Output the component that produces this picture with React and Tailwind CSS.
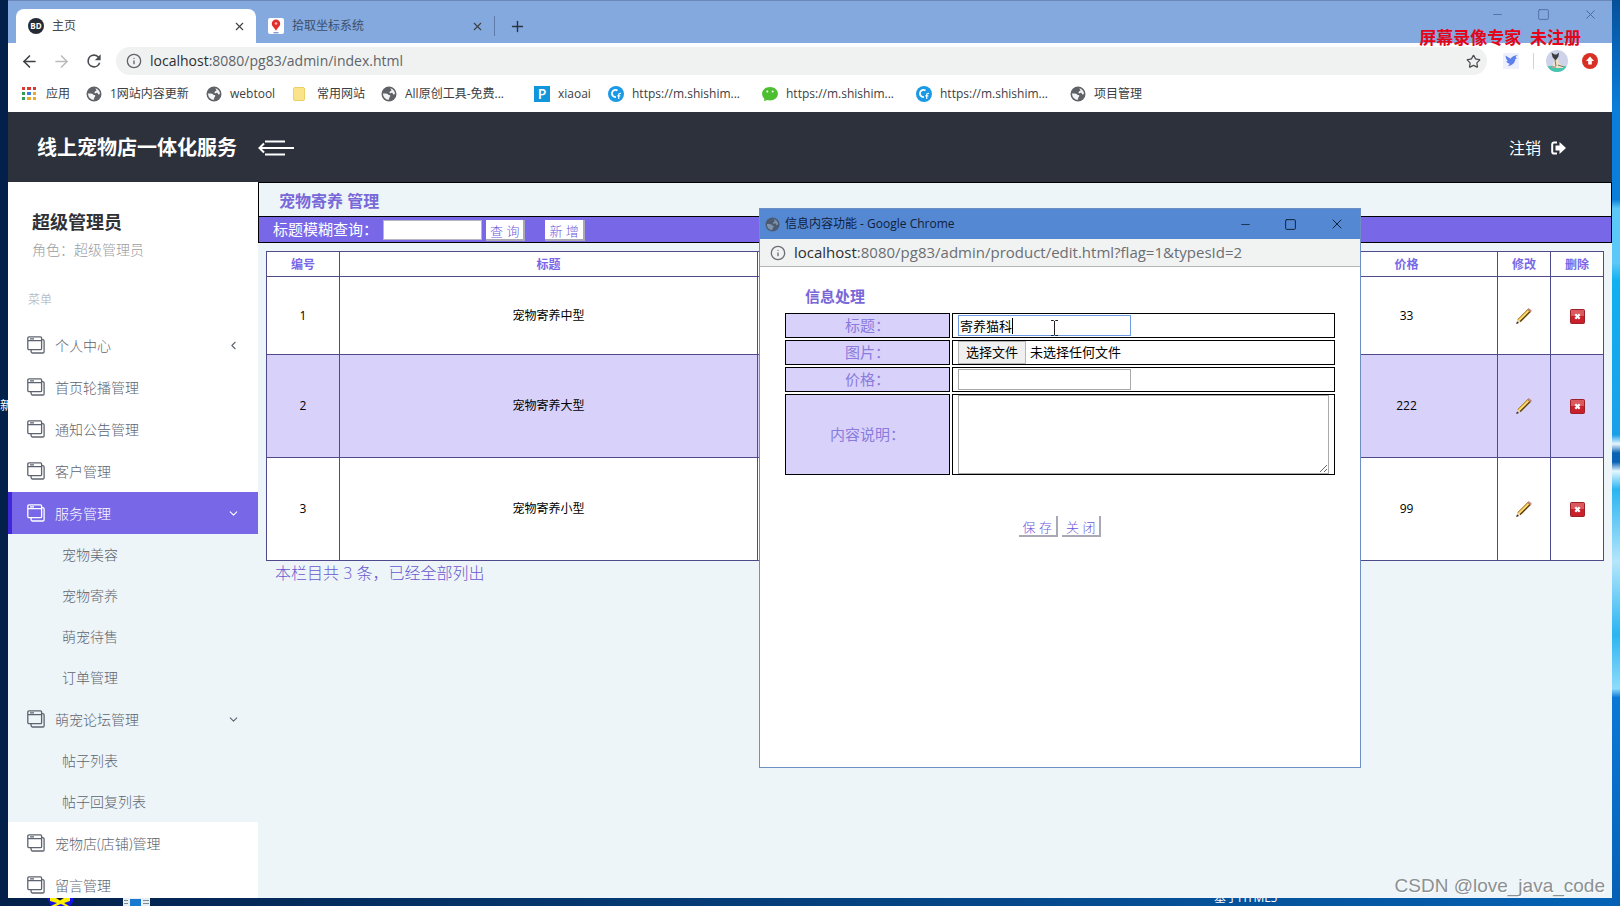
import React, { useState } from "react";
import { ArrowLeft, ArrowRight, ChevronDown, ChevronLeft, Info, Minus, Plus, Square, Star, X } from "lucide-react";

const BOOKMARKS = [
  { label: "1网站内容更新", icon: "globe", width: "w-[120px]" },
  { label: "webtool", icon: "globe", width: "w-[87px]" },
  { label: "常用网站", icon: "folder", width: "w-[88px]" },
  { label: "All原创工具-免费...", icon: "globe", width: "w-[153px]" },
  { label: "xiaoai", icon: "p", width: "w-[74px]" },
  { label: "https://m.shishim...", icon: "c", width: "w-[154px]" },
  { label: "https://m.shishim...", icon: "wechat", width: "w-[154px]" },
  { label: "https://m.shishim...", icon: "c", width: "w-[154px]" },
  { label: "项目管理", icon: "globe", width: "w-[90px]" },
];

const MENU = [
  { label: "个人中心", arrow: "left" },
  { label: "首页轮播管理" },
  { label: "通知公告管理" },
  { label: "客户管理" },
  { label: "服务管理", arrow: "down", active: true, children: ["宠物美容", "宠物寄养", "萌宠待售", "订单管理"] },
  { label: "萌宠论坛管理", arrow: "down", children: ["帖子列表", "帖子回复列表"] },
  { label: "宠物店(店铺)管理" },
  { label: "留言管理" },
];

const ROWS = [
  { id: 1, title: "宠物寄养中型", price: 33, height: "h-[78px]" },
  { id: 2, title: "宠物寄养大型", price: 222, height: "h-[103px]" },
  { id: 3, title: "宠物寄养小型", price: 99, height: "h-[103px]" },
];

const APP_DOTS = ["#d93b30", "#d93b30", "#d93b30", "#2f9e5b", "#3b7de0", "#e8a92c", "#2f9e5b", "#e8a92c", "#e8a92c"];

function GlobeIcon({ size = 16, color = "#5f6368", land = "#f4f4f4" }) {
  return (
    <svg width={size} height={size} viewBox="0 0 16 16" className="shrink-0">
      <circle cx="8" cy="8" r="7.500" fill={color} />
      <path
        fill={land}
        d="M9.500 2.300c2.400.6 4.300 2.700 4.500 5.400-.7.700-1.300 1.100-1.900.6-.5-.5-.2-1.400-1-1.500-.9-.1-1.200.8-2 .5-.9-.3-.6-1.200-.1-1.700.5-.6 1.300-.5 1.400-1.200.1-.8-.9-1-.9-2.100z"
      />
      <path
        fill={land}
        d="M2 7.600c1.800-.4 4.300-.2 5.200.8.7.8 1.600.4 2 1.100.4.900-.5 1.300-.8 2-.3.800-.1 1.700-1 2.400-3-.3-5.300-2.900-5.400-6.300z"
      />
    </svg>
  );
}

function BookmarkIcon({ type }) {
  if (type === "globe") return <GlobeIcon />;
  if (type === "folder") return <span className="w-3 h-3.5 mr-1 shrink-0 rounded-xs bg-[#fbe38a] border border-[#ecd066]" />;
  if (type === "p") {
    return (
      <span className="w-4 h-4 shrink-0 bg-[#1296db] text-white text-sm leading-4 text-center font-semibold">P</span>
    );
  }
  if (type === "wechat") {
    return (
      <svg width="16" height="16" viewBox="0 0 16 16" className="shrink-0">
        <path fill="#4bbf2f" d="M8 1c4.400 0 7.900 2.900 7.900 6.700S12.400 14.400 8 14.400c-.9 0-1.700-.1-2.500-.3L2 15l.4-2.200C1 11.500.1 9.700.1 7.700.1 3.900 3.600 1 8 1z" />
        <circle cx="5.300" cy="5.600" r="1" fill="#fff" />
        <circle cx="10.700" cy="5.600" r="1" fill="#fff" />
      </svg>
    );
  }
  return (
    <svg width="16" height="16" viewBox="0 0 16 16" className="shrink-0">
      <circle cx="8" cy="8" r="8" fill="#1a9ae6" />
      <path d="M9.500 4.400A3.600 3.600 0 1 0 8 11" fill="none" stroke="#fff" strokeWidth="1.800" />
      <path d="M13 7.500c-1.800-.6-2.300.3-2.300 1.700V13M9.300 9.800h3" fill="none" stroke="#fff" strokeWidth="1.200" />
    </svg>
  );
}

function ReloadIcon() {
  return (
    <svg width="20" height="20" viewBox="0 0 24 24">
      <path
        fill="#4a4d51"
        d="M17.650 6.350A7.960 7.960 0 0 0 12 4a8 8 0 1 0 7.730 10h-2.080A6 6 0 1 1 12 6c1.660 0 3.140.69 4.220 1.780L13 11h7V4z"
      />
    </svg>
  );
}

function MenuIcon() {
  return (
    <svg width="18" height="18" viewBox="0 0 18 18" fill="none" stroke="currentColor" strokeWidth="1.300" className="shrink-0">
      <rect x="0.800" y="0.800" width="13.800" height="12.800" rx="1.200" />
      <path d="M1 4.700h13.500M3 2.800h4" />
      <path d="M14.600 3.600h1a1.500 1.500 0 0 1 1.500 1.500v10.700a1.200 1.200 0 0 1-1.200 1.200H5.600a1.500 1.500 0 0 1-1.500-1.500v-1.700" />
    </svg>
  );
}

function PencilIcon() {
  return (
    <svg width="16" height="16" viewBox="0 0 16 16">
      <path d="M1.500 11.500 11.500 1.500l3 2.500-10 10z" fill="#d9a63a" />
      <path d="M2.600 11.800 12 2.500l1 .9-9.500 9.500z" fill="#f6e27a" />
      <path d="m4 13.800 10-10" stroke="#5a3d14" strokeWidth="1.300" />
      <path d="m1.500 11.500 10-10" stroke="#a67a28" strokeWidth=".7" />
      <path d="m11.500 1.500 1.200-1 2.800 2.300-1.200 1.300z" fill="#d58c7b" stroke="#8a5b3c" strokeWidth=".5" />
      <path d="m1.500 11.500 3 2.500-4 1.800z" fill="#e9cfa6" />
      <path d="M1 13.500.2 16l2.800-1z" fill="#222" />
    </svg>
  );
}

function DeleteIcon() {
  return (
    <svg width="15" height="15" viewBox="0 0 15 15">
      <rect x="0.500" y="0.500" width="14" height="14" rx="1" fill="#c9202b" stroke="#9c2028" />
      <rect x="1" y="1" width="13" height="6" fill="#dc5a5f" />
      <path d="m5.300 5.300 4.400 4.400m0-4.400L5.300 9.700" stroke="#fff" strokeWidth="2.200" />
    </svg>
  );
}

function Tab({ label, icon, active, width }) {
  return (
    <div className={`flex items-center h-[34px] pl-3 pr-2.5 text-xs ${width} ${active ? "bg-white rounded-t-lg text-[#45484c]" : "text-[#3c4f6b]"}`}>
      {icon}
      <span className="ml-2 flex-1 truncate">{label}</span>
      <button type="button" aria-label={`关闭 ${label}`}>
        <X size={13} className="text-[#3c4043]" />
      </button>
    </div>
  );
}

function BrowserChrome() {
  return (
    <div className="shrink-0">
      <div className="flex items-end h-[43px] bg-[#83a9df] border-t border-[#6b87b8] pl-2">
        <Tab
          label="主页"
          active
          width="w-[240px]"
          icon={
            <span className="w-4 h-4 rounded-full bg-[#262a33] text-white text-[8px] leading-4 text-center font-bold">BD</span>
          }
        />
        <Tab
          label="拾取坐标系统"
          width="w-[238px]"
          icon={
            <svg width="16" height="16" viewBox="0 0 16 16" className="shrink-0">
              <rect width="16" height="16" rx="2" fill="#fff" />
              <path d="M8 1.500a4.200 4.200 0 0 1 4.200 4.200C12.200 8.500 9 10 8 13 7 10 3.800 8.500 3.800 5.700A4.200 4.200 0 0 1 8 1.500z" fill="#e02f2c" />
              <circle cx="8" cy="5.500" r="1.300" fill="#f7b5b3" />
              <path d="M5.500 14.800h5" stroke="#5570c8" />
            </svg>
          }
        />
        <div className="flex items-center h-[34px] gap-3.5">
          <span className="w-px h-5 bg-[#5d7aa8]" />
          <button type="button" aria-label="新标签页">
            <Plus size={17} className="text-[#2b3440]" />
          </button>
        </div>
        <div className="ml-auto self-start flex items-center gap-[33px] mt-1.5 pr-3.5 text-[#48689c]">
          <button type="button" aria-label="最小化"><Minus size={13} strokeWidth={1.5} /></button>
          <button type="button" aria-label="最大化"><Square size={13} strokeWidth={1.5} /></button>
          <button type="button" aria-label="关闭"><X size={15} strokeWidth={1.5} /></button>
        </div>
      </div>

      <div className="flex items-center h-9 bg-white pl-3 pr-3.5 text-[#5f6368]">
        <button type="button" aria-label="后退" className="w-8"><ArrowLeft size={19} className="text-[#3c4043]" /></button>
        <button type="button" aria-label="前进" className="w-8"><ArrowRight size={19} className="text-[#b9bbbe]" /></button>
        <button type="button" aria-label="刷新" className="w-8"><ReloadIcon /></button>
        <div className="flex-1 flex items-center h-7 mr-4 pl-2.5 pr-1.5 rounded-full bg-[#f0f2f2] text-sm">
          <Info size={16} className="mr-2 shrink-0" />
          <span><span className="text-[#2c2e31]">localhost</span>:8080/pg83/admin/index.html</span>
          <button type="button" aria-label="收藏" className="ml-auto"><Star size={15} className="text-[#4a4d51]" /></button>
        </div>
        <svg width="16" height="16" viewBox="0 0 16 16" className="shrink-0">
          <rect width="16" height="16" fill="#eef1fd" />
          <path fill="#5c80ee" d="m2.500 2.500 5 3.200C9 3.500 11 2.700 14.500 2c-1.300 1-1.700 1.700-1.900 2.300l1.400.9-1.700 1.100C12 9.800 9.500 12.500 5 13c1-.8 1.500-1.500 1.700-2.200C4.500 10.300 3.800 9.300 3.300 8l1.700.2C3.500 6.500 2.700 5 2.500 2.500z" />
        </svg>
        <span className="w-px h-4 ml-3.5 mr-3 bg-[#cfd3d8]" />
        <svg width="22" height="22" viewBox="0 0 22 22" className="shrink-0">
          <clipPath id="avatar"><circle cx="11" cy="11" r="11" /></clipPath>
          <g clipPath="url(#avatar)">
            <rect width="22" height="22" fill="#cfd3ea" />
            <path d="M0 17c5-2 16-2 22 0v5H0z" fill="#45c4b0" />
            <path d="M8 9h4l1 4 5 4-1 1H6z" fill="#ece2cc" />
            <path d="m5.500 2.500 3 2h2l2.500-2-.5 4-2.500 3.500h-1L6.500 7z" fill="#3a3f42" />
            <path d="m9 10 1 6M12 15l6 2M6 17h4" stroke="#7d7766" />
          </g>
        </svg>
        <svg width="16" height="16" viewBox="0 0 16 16" className="ml-3.5 shrink-0">
          <circle cx="8" cy="8" r="8" fill="#d93025" />
          <path d="M8 3.500 12 8H9.800v3.500H6.200V8H4z" fill="#fff" />
        </svg>
      </div>

      <nav className="flex items-center h-[33px] pb-1 bg-white pl-3.5 text-xs text-[#3c4043] whitespace-nowrap">
        <a href="#apps" className="flex items-center gap-2.5 w-[64px]">
          <span className="grid grid-cols-3 gap-0.5 w-[14px]">
            {APP_DOTS.map((c, i) => (
              <span key={i} className="h-[3px]" style={{ backgroundColor: c }} />
            ))}
          </span>
          应用
        </a>
        {BOOKMARKS.map((b, i) => (
          <a key={i} href="#bookmark" className={`flex items-center gap-2 shrink-0 ${b.width}`}>
            <BookmarkIcon type={b.icon} />
            {b.label}
          </a>
        ))}
      </nav>
    </div>
  );
}

function MenuItem({ item }) {
  const Arrow = item.arrow === "left" ? ChevronLeft : ChevronDown;
  return (
    <li className={item.children ? "bg-[#edf5f8]" : ""}>
      <a
        href="#menu"
        className={`flex items-center h-[42px] pr-[18px] ${item.active ? "bg-[#7868e8] text-white border-l-4 border-[#4027d8] pl-[15px]" : "pl-[19px]"}`}
      >
        <MenuIcon />
        <span className="ml-2.5 pt-0.5">{item.label}</span>
        {item.arrow && <Arrow size={13} className="ml-auto" />}
      </a>
      {item.children && (
        <ul>
          {item.children.map((c) => (
            <li key={c}>
              <a href="#submenu" className="flex items-center h-[41px] pl-[54px]">{c}</a>
            </li>
          ))}
        </ul>
      )}
    </li>
  );
}

function Sidebar() {
  return (
    <aside className="w-[250px] shrink-0 bg-white overflow-hidden text-sm font-light text-[#5d6470]">
      <div className="pt-6 pl-6">
        <h2 className="text-lg leading-8 font-bold text-[#2f3136]">超级管理员</h2>
        <p className="leading-6 text-[#9a9da3]">角色：超级管理员</p>
      </div>
      <p className="mt-[26px] pl-5 h-9 leading-6 text-xs text-[#a6a9ae]">菜单</p>
      <ul>
        {MENU.map((item) => (
          <MenuItem key={item.label} item={item} />
        ))}
      </ul>
    </aside>
  );
}

function FlatButton({ children }) {
  return (
    <button
      type="button"
      className="h-[21px] px-1 pt-0.5 leading-4 bg-white text-[13px] font-light text-[#6a58dc] border-r-2 border-b-2 border-[#a9a9b5] whitespace-pre"
    >
      {children}
    </button>
  );
}

function ListPage() {
  const head = "pt-0.5 border border-[#4f4a8c] font-bold text-[#7868e8]";
  const cell = "border border-[#4f4a8c]";
  return (
    <main className="flex-1 min-w-0 bg-[#edf5f8]">
      <h1 className="h-[34px] leading-9 pl-5 border border-black border-b-0 font-bold text-base text-[#7868d8]">宠物寄养 管理</h1>
      <form className="flex items-center h-[27px] pl-[14px] bg-[#7868e8] border border-black text-white">
        <label htmlFor="keyword" className="w-[110px] text-[15px] whitespace-nowrap">标题模糊查询：</label>
        <input id="keyword" className="w-[99px] h-5 bg-white border border-[#b5b5c4] text-xs text-black" />
        <div className="flex gap-5 ml-1 pt-0.5">
          <FlatButton>查 询</FlatButton>
          <FlatButton>新 增</FlatButton>
        </div>
      </form>
      <div className="pt-2 px-2">
        <table className="w-full table-fixed border-collapse bg-white text-center text-xs text-black">
          <colgroup>
            <col className="w-[73px]" />
            <col className="w-[418px]" />
            <col />
            <col className="w-[182px]" />
            <col className="w-[53px]" />
            <col className="w-[53px]" />
          </colgroup>
          <thead>
            <tr className="h-[25px]">
              <th className={head}>编号</th>
              <th className={head}>标题</th>
              <th className={head} aria-label="图片" />
              <th className={head}>价格</th>
              <th className={head}>修改</th>
              <th className={head}>删除</th>
            </tr>
          </thead>
          <tbody>
            {ROWS.map((r) => (
              <tr key={r.id} className={`${r.height} even:bg-[#d8d2fb]`}>
                <td className={cell}>{r.id}</td>
                <td className={cell}>{r.title}</td>
                <td className={cell} />
                <td className={cell}>{r.price}</td>
                <td className={cell}>
                  <button type="button" aria-label="修改" className="align-middle"><PencilIcon /></button>
                </td>
                <td className={cell}>
                  <button type="button" aria-label="删除" className="align-middle"><DeleteIcon /></button>
                </td>
              </tr>
            ))}
          </tbody>
        </table>
        <p className="pl-[9px] leading-6 text-base font-light text-[#6a58cf]">本栏目共 3 条，已经全部列出</p>
      </div>
    </main>
  );
}

function FormRow({ id, label, height, children }) {
  return (
    <div className={`flex gap-0.5 ${height}`}>
      <label htmlFor={id} className="flex items-center justify-center w-[165px] border border-black bg-[#d8d2fb] text-[#8a7bdc]">
        {label}
      </label>
      <div className="relative flex-1 flex items-center px-[5px] border border-black text-[13px] text-black">
        {children}
      </div>
    </div>
  );
}

function EditWindow() {
  const [title, setTitle] = useState("寄养猫科");
  return (
    <section className="absolute left-[759px] top-[208px] w-[602px] h-[560px] flex flex-col bg-white border border-[#6d8fc4]">
      <header className="flex items-center h-[30px] pl-[5px] pr-[15px] bg-[#5488d2] text-xs text-[#10213c]">
        <GlobeIcon size={15} color="#4c5c70" land="#7d93ad" />
        <span className="ml-[5px]">信息内容功能 - Google Chrome</span>
        <div className="ml-auto flex items-center gap-8 text-[#10213c]">
          <button type="button" aria-label="最小化"><Minus size={13} strokeWidth={1.5} /></button>
          <button type="button" aria-label="最大化"><Square size={13} strokeWidth={1.8} /></button>
          <button type="button" aria-label="关闭"><X size={16} strokeWidth={1.5} /></button>
        </div>
      </header>
      <div className="flex items-center h-[28px] pl-2.5 bg-[#f1f3f3] border-b border-[#b4b7ba] text-[15px] text-[#6b6e72]">
        <Info size={16} className="mr-2 shrink-0" />
        <span><span className="text-[#2c2e31]">localhost</span>:8080/pg83/admin/product/edit.html?flag=1&amp;typesId=2</span>
      </div>
      <form className="pt-[15px] px-[25px] text-[15px]">
        <h2 className="pl-5 h-[31px] leading-7 font-bold text-[#7868d8]">信息处理</h2>
        <div className="flex flex-col gap-0.5">
          <FormRow id="title" label="标题：" height="h-[25px]">
            <input
              id="title"
              value={title}
              onChange={(e) => setTitle(e.target.value)}
              className="w-[173px] h-[21px] px-px border border-[#6f9be6] outline-none"
            />
            <span className="absolute left-[59px] top-1 w-px h-4 bg-black" />
            <svg width="7" height="16" viewBox="0 0 7 16" fill="none" stroke="#222" className="absolute left-[98px] top-1.5">
              <path d="M0 .5h2.500l1 1 1-1H7M3.500 1v14M0 15.500h2.500l1-1 1 1H7" />
            </svg>
          </FormRow>
          <FormRow id="picture" label="图片：" height="h-[25px]">
            <input id="picture" type="file" className="sr-only" />
            <label htmlFor="picture" className="h-[23px] px-[7px] leading-[21px] bg-[#f0f0f0] border border-[#b5b5b5]">选择文件</label>
            <span className="ml-1">未选择任何文件</span>
          </FormRow>
          <FormRow id="price" label="价格：" height="h-[25px]">
            <input id="price" className="w-[173px] h-[21px] px-0.5 border border-[#a9a9a9]" />
          </FormRow>
          <FormRow id="content" label="内容说明：" height="h-[81px]">
            <textarea id="content" className="w-full h-[79px] border border-[#a9a9a9] resize" />
          </FormRow>
        </div>
        <div className="flex justify-center gap-1 mt-[41px]">
          <FlatButton>保 存</FlatButton>
          <FlatButton>关 闭</FlatButton>
        </div>
      </form>
    </section>
  );
}

export default function App() {
  return (
    <div className="relative h-screen overflow-hidden flex flex-col px-2 bg-linear-to-r from-[#03204a] to-[#0563b5] font-['Open_Sans','Noto_Sans_CJK_SC',sans-serif]">
      <div className="absolute right-0 top-0 w-2 h-full bg-[linear-gradient(to_bottom,#06509c_0%,#0a7edb_12%,#0a7edb_22%,#5cc8f7_23%,#5cc8f7_29%,#0fb0f2_31%,#1a9fe8_48%,#e6f7fd_49%,#0a62b4_50%,#0a62b4_51%,#e6f7fd_52%,#2ab4f2_54%,#b5e6fb_62%,#2ab4f2_70%,#8fdcfb_76%,#0a78d8_77%,#0660b4_100%)]" />
      <span className="absolute left-0 top-[398px] w-2 h-4 overflow-hidden text-xs leading-4 text-white">新</span>

      <div className="relative flex-1 min-h-0 flex flex-col bg-[#edf5f8]">
        <BrowserChrome />
        <header className="flex items-center h-[70px] shrink-0 pt-0.5 pl-[29px] pr-[46px] bg-[#2d313b] text-white">
          <span className="text-xl font-bold">线上宠物店一体化服务</span>
          <button type="button" aria-label="收起菜单" className="ml-[21px]">
            <svg width="36" height="16" viewBox="0 0 36 16" fill="none" stroke="#fff" strokeWidth="2">
              <path d="M7 1.500h20M2 8h34M7 14.500h20M6 3.500 1.500 8 6 12.500" />
            </svg>
          </button>
          <a href="#logout" className="ml-auto flex items-center gap-2.5 text-base">
            注销
            <svg width="15" height="14" viewBox="0 0 15 14">
              <path d="M6 1.500H3A1.800 1.800 0 0 0 1.200 3.300v7.400A1.800 1.800 0 0 0 3 12.500h3" fill="none" stroke="#fff" strokeWidth="2" />
              <path d="M8.500 1 15 7l-6.500 6V9.500H4.500v-5h4z" fill="#fff" />
            </svg>
          </a>
        </header>
        <div className="flex-1 min-h-0 flex">
          <Sidebar />
          <ListPage />
        </div>
      </div>

      <footer className="relative h-2 shrink-0 overflow-hidden text-xs text-white">
        <svg width="30" height="8" viewBox="0 0 30 8" className="absolute left-[39px] top-0">
          <path d="M0 0h26v4l-3 4H4L2 4z" fill="#1414e8" />
          <path d="M3 0h20v3l-6 2 5 3h-4l-4-2-5 2H4l6-3-7-2z" fill="#ffef00" />
          <path d="m9 0 4 2.500L17 0z" fill="#0a1230" />
        </svg>
        <svg width="27" height="8" viewBox="0 0 27 8" className="absolute left-[115px] top-0">
          <path fill="#e9eef2" d="M0 0h27v8H0z" />
          <path fill="#1779d0" d="M7 1h11v7H7z" />
          <path stroke="#7c8a94" d="M1 2.500h4M1 5.500h4M20 2.500h6M20 5.500h6" />
        </svg>
        <span className="absolute left-[1206px] -top-2 leading-4">基于HTML5</span>
      </footer>

      <EditWindow />

      <p className="absolute right-[39px] top-[26px] text-[17px] leading-6 font-bold text-[#e3061a] whitespace-pre">屏幕录像专家  未注册</p>
      <p className="absolute right-[15px] bottom-2 text-[19px] leading-6 font-['Liberation_Sans',sans-serif] text-[#8c9194] text-shadow-[1px_1px_0_#ffffff]">
        CSDN @love_java_code
      </p>
    </div>
  );
}
